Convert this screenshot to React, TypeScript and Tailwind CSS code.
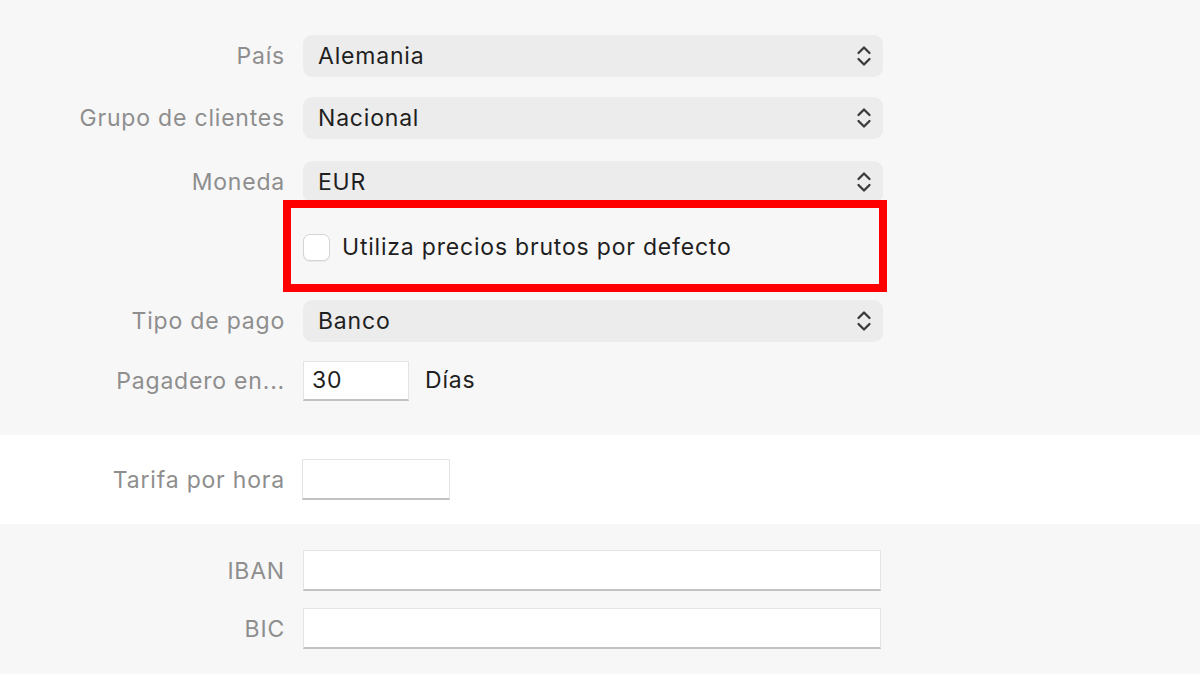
import React from "react";

const font = { fontFamily: "Inter, 'Liberation Sans', Arial, sans-serif" };

function Chevrons() {
  return (
    <svg width="16" height="24" viewBox="0 0 16 24" fill="none" stroke="#3a3a3a" strokeWidth="2.3" strokeLinecap="round" strokeLinejoin="round">
      <path d="M2.5 9 L8 3.5 L13.5 9" />
      <path d="M2.5 15 L8 20.5 L13.5 15" />
    </svg>
  );
}

function Label({ children }: { children: React.ReactNode }) {
  return (
    <div className="w-[285px] shrink-0 text-right text-[23px] tracking-[0.8px] text-[#8e8e8e] leading-none mt-[1px] whitespace-nowrap">
      {children}
    </div>
  );
}

function SelectRow({ label, value }: { label: string; value: string }) {
  return (
    <div className="flex items-center h-[42px]">
      <Label>{label}</Label>
      <div className="ml-[18px] w-[580px] h-[42px] rounded-[9px] bg-[#ececec] flex items-center justify-between pl-[15px] pr-[11px]">
        <span className="text-[23px] tracking-[0.8px] text-[#1f1f1f] leading-none mt-[1px]">{value}</span>
        <Chevrons />
      </div>
    </div>
  );
}

function TextInput({ w, h, children }: { w: string; h: string; children?: React.ReactNode }) {
  return (
    <div className={`${w} ${h} bg-white border border-[#e4e4e4] border-b-[#c2c2c2] border-b-2 flex items-center px-[8px] text-[23px] tracking-[0.8px] text-[#1f1f1f] leading-none`}>
      {children}
    </div>
  );
}

export default function App() {
  return (
    <div className="w-[1200px] h-[674px] overflow-hidden bg-[#f7f7f7]" style={font}>
      <div className="pt-[35px] pb-[34px] flex flex-col">
        <SelectRow label="País" value="Alemania" />
        <div className="h-[20px]" />
        <SelectRow label="Grupo de clientes" value="Nacional" />
        <div className="h-[22px]" />
        <SelectRow label="Moneda" value="EUR" />
        <div className="relative h-[88px] flex items-center">
          <div className="ml-[303px] flex items-center gap-[12px]">
            <div className="w-[27px] h-[27px] rounded-[7px] bg-white border border-[#d4d4d4] shadow-[0_1px_1px_rgba(0,0,0,0.06)]" />
            <span className="text-[23px] tracking-[0.8px] text-[#1f1f1f] leading-none">Utiliza precios brutos por defecto</span>
          </div>
          <div className="absolute left-[283px] top-[-3px] w-[604px] h-[92px] border-[8px] border-[#ff0000]" />
        </div>
        <div className="h-[9px]" />
        <SelectRow label="Tipo de pago" value="Banco" />
        <div className="h-[19px]" />
        <div className="flex items-center h-[40px]">
          <Label>Pagadero en...</Label>
          <div className="ml-[18px]">
            <TextInput w="w-[106px]" h="h-[40px]">30</TextInput>
          </div>
          <span className="ml-[16px] text-[23px] tracking-[0.8px] text-[#1f1f1f] leading-none -mt-[1px]">Días</span>
        </div>
      </div>
      <div className="bg-white h-[89px] flex items-center">
        <div className="flex items-center h-[41px]">
          <Label>Tarifa por hora</Label>
          <div className="ml-[17px]">
            <TextInput w="w-[148px]" h="h-[41px]" />
          </div>
        </div>
      </div>
      <div className="pt-[26px] flex flex-col">
        <div className="flex items-center h-[41px]">
          <Label>IBAN</Label>
          <div className="ml-[18px]">
            <TextInput w="w-[578px]" h="h-[41px]" />
          </div>
        </div>
        <div className="h-[17px]" />
        <div className="flex items-center h-[41px]">
          <Label>BIC</Label>
          <div className="ml-[18px]">
            <TextInput w="w-[578px]" h="h-[41px]" />
          </div>
        </div>
      </div>
    </div>
  );
}
